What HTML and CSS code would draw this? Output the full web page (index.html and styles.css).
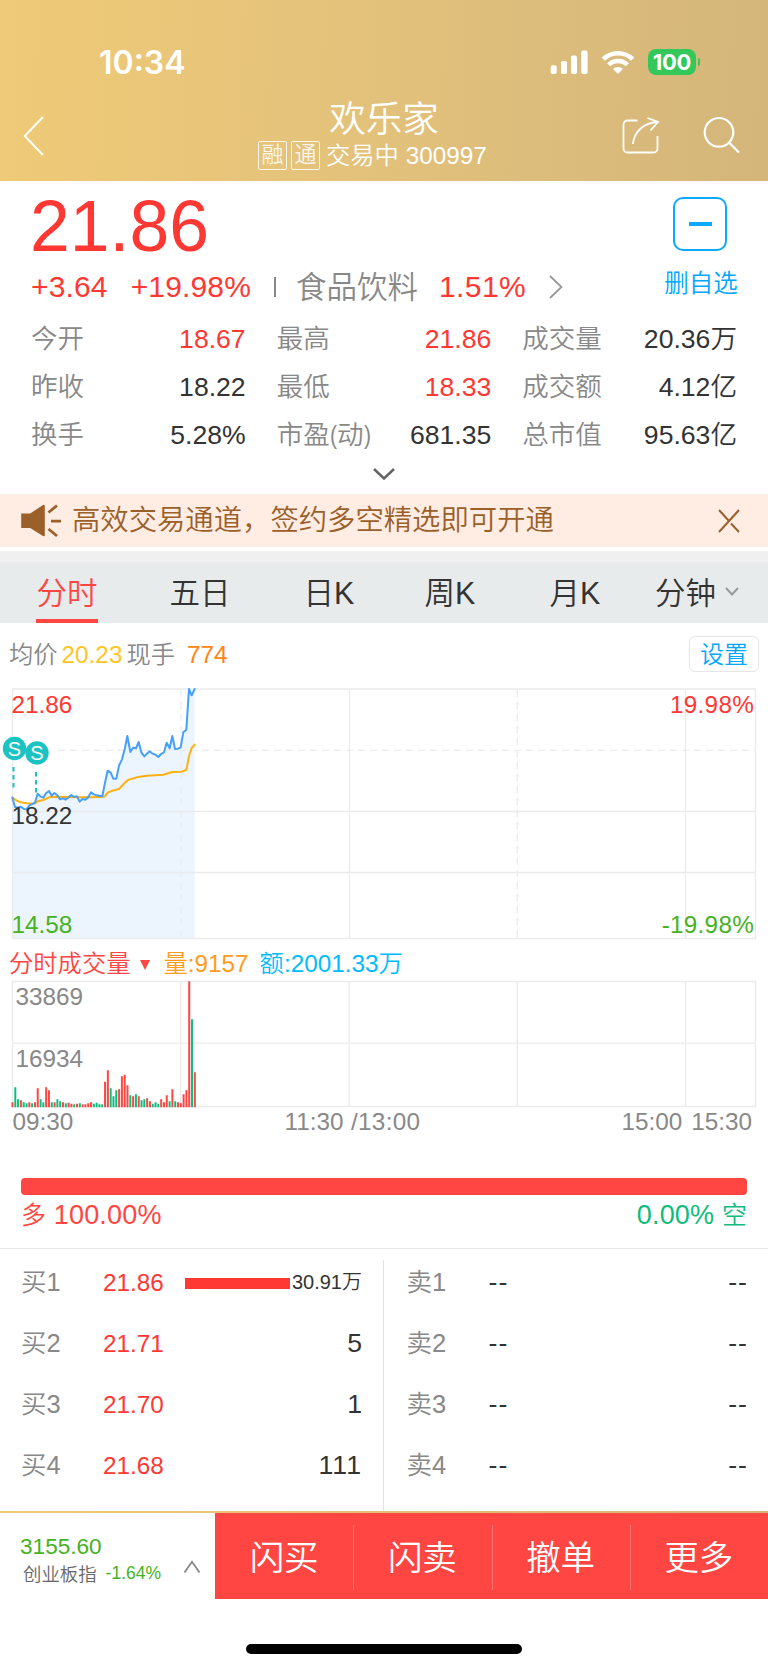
FILE: index.html
```html
<!DOCTYPE html>
<html lang="zh-CN">
<head>
<meta charset="utf-8">
<title>欢乐家 300997</title>
<link rel="stylesheet" href="styles.css">
</head>
<body>
<div class="app">
  <header class="header">
    <div class="status">
      <span class="clock">10:34</span>
      <div class="status-icons">
        <svg class="signal" width="38" height="26" viewBox="0 0 38 26" fill="#fff"><rect x=".7" y="15.3" width="6" height="8.7" rx="1.8"/><rect x="11" y="11" width="6" height="13" rx="1.8"/><rect x="21" y="5.6" width="6" height="18.4" rx="1.8"/><rect x="31.2" y="0.6" width="6.4" height="23.4" rx="1.8"/></svg>
        <svg class="wifi" width="34" height="26" viewBox="0 0 34 26" fill="none" stroke="#fff"><path d="M2.3 9.2a21 21 0 0 1 29.4 0" stroke-width="4.6"/><path d="M7.6 14.8a13.4 13.4 0 0 1 18.8 0" stroke-width="4.4"/><path d="M17 24l-5-5.1a7.2 7.2 0 0 1 10 0z" fill="#fff" stroke="none"/></svg>
        <span class="battery">100</span><i class="nub"></i>
      </div>
    </div>
    <div class="nav">
      <svg class="back" width="22" height="42" viewBox="0 0 22 42" fill="none" stroke="#fff" stroke-width="2"><path d="M20 2L1.8 21 20 40"/></svg>
      <div class="title">
        <h1>欢乐家</h1>
        <p><span class="tag">融</span><span class="tag">通</span><span class="state">交易中 300997</span></p>
      </div>
      <div class="nav-actions">
        <svg width="38" height="40" viewBox="0 0 38 40" fill="none" stroke="#fff" stroke-width="1.8"><path d="M15.5 4.5H5.5a4 4 0 0 0-4 4V32.500a4 4 0 0 0 4 4H31.500a4 4 0 0 0 4-4V20"/><path d="M10.800 28C12.500 15 22 7 35 6M25.500 2L36 6l-7.500 8.500"/></svg>
        <svg width="38" height="40" viewBox="0 0 38 40" fill="none" stroke="#fff" stroke-width="2.200"><circle cx="16" cy="16.300" r="14.300"/><path d="M26 26.500L36 36.500"/></svg>
      </div>
    </div>
  </header>

  <section class="quote">
    <div class="quote-main">
      <div class="price">21.86</div>
      <div class="change"><span>+3.64</span><span class="pct">+19.98%</span><i class="bar"></i><span class="sector">食品饮料</span><span class="sector-pct">1.51%</span>
        <svg width="16" height="26" viewBox="0 0 16 26" fill="none" stroke="#999" stroke-width="1.8"><path d="M2 2l11.500 11L2 24"/></svg></div>
    </div>
    <div class="watch"><div class="minus"><i></i></div><span>删自选</span></div>
  </section>
  <dl class="stats">
    <div><dt>今开</dt><dd class="up">18.67</dd></div><div><dt>最高</dt><dd class="up">21.86</dd></div><div><dt>成交量</dt><dd>20.36万</dd></div>
    <div><dt>昨收</dt><dd>18.22</dd></div><div><dt>最低</dt><dd class="up">18.33</dd></div><div><dt>成交额</dt><dd>4.12亿</dd></div>
    <div><dt>换手</dt><dd>5.28%</dd></div><div><dt>市盈<span class="paren">(</span>动<span class="paren">)</span></dt><dd>681.35</dd></div><div><dt>总市值</dt><dd>95.63亿</dd></div>
  </dl>
  <div class="expand"><svg width="24" height="14" viewBox="0 0 24 14" fill="none" stroke="#666" stroke-width="2.600"><path d="M2 2l10 9.500L22 2"/></svg></div>

  <div class="banner">
    <svg width="42" height="36" viewBox="0 0 42 36" fill="#9b602a"><path d="M1.200 10.500h9L23 2q1.800-1 1.800 1V32q0 2-1.800 1L10.200 25h-9z"/><g stroke="#9b602a" stroke-width="2.800" fill="none"><path d="M28.500 9.500L37 2.500M31 18.200h10M28.500 26L37 33"/></g></svg>
    <span>高效交易通道，签约多空精选即可开通</span>
    <svg width="24" height="26" viewBox="0 0 24 26" fill="none" stroke="#9b602a" stroke-width="2"><path d="M22 2L2 24M2 2l9.500 10.500M14 15.500l8 8.500"/></svg>
  </div>
  <nav class="tabs">
    <a class="active">分时</a><a>五日</a><a>日K</a><a>周K</a><a>月K</a><a>分钟<svg width="16" height="11" viewBox="0 0 16 11" fill="none" stroke="#999" stroke-width="2"><path d="M2 2l6 6.500L14 2"/></svg></a>
  </nav>

  <div class="info"><span class="c-gray">均价</span><span class="avg">20.23</span><span class="c-gray">现手</span><span class="hand">774</span><button class="settings">设置</button></div>

  <svg class="chart" width="768" height="260" viewBox="0 680 768 260">
    <path d="M12.300 797.700L15 807 24 808.500 29 806 35 803 38 794 46 793 49 791 60 798 72 794 80 801 92 792 102 796.500 105 782.700 107.500 771 110.700 773 113.300 778.700 116.300 778.700 119 765.700 122 759 124.700 749 127.500 736 130.300 752 133 748 139 742 144 756 150 751 158 757 164 752 167 742.500 170 748 172 736 175 749 181 747 183.300 732.500 186.300 729.500 189 689 191.700 695 194.700 689V938.500H12.300z" class="area"/>
    <g class="grid">
      <path d="M12.500 689H755.500V938.500H12.500zM12.500 811.500H755.500M12.500 872.500H755.500M349.500 689V938.500M685.500 689V938.500"/>
      <path class="dash" d="M58 750.300H755.500M181 690V938.500M517.300 690V938.500"/>
    </g>
    <text x="11.500" y="712.500" class="up">21.86</text>
    <text x="754" y="712.500" class="up end wide">19.98%</text>
    <text x="11.500" y="933" class="down">14.58</text>
    <text x="754" y="933" class="down end wide">-19.98%</text>
    <g transform="translate(0 680) scale(.333333)" fill="none" stroke-width="6" stroke-linejoin="round" stroke-linecap="round">
      <polyline stroke="#ffb013" points="37,353 50,362 62,367 80,370 97,371 105,370 113,364 130,360 147,352 170,350 240,352 280,352 313,350 323,338 335,333 357,327 370,313 384,300 410,292 440,287 490,284 517,276 545,275 559,270 567,228 575,204 584,194"/>
      <polyline stroke="#47a0f8" points="37,353 45,381 54,383 62,380 72,387 80,388 88,376 97,372 105,368 113,341 121,349 130,353 138,340 147,333 155,347 163,339 172,346 180,358 189,355 197,359 206,352 214,345 222,351 231,349 239,365 247,357 256,359 264,353 273,337 281,343 290,346 307,349 315,308 323,272 332,278 340,296 349,296 357,257 366,238 374,208 382,168 391,216 399,203 408,205 416,186 424,217 433,229 441,221 449,214 458,221 466,224 475,231 483,222 492,217 500,188 509,205 517,168 525,207 534,206 542,202 550,157 559,149 567,27 575,46 584,27"/>
    </g>
    <text x="11.500" y="823.500" class="ink">18.22</text>
    <g class="marks"><path d="M13.500 767V788M36 772V793"/><circle cx="14.500" cy="748.500" r="11.700"/><circle cx="37" cy="753" r="11.700"/><text x="14.500" y="755.500">S</text><text x="37" y="760">S</text></g>
  </svg>

  <div class="vol-legend"><span class="c-red">分时成交量</span><i class="tri"></i><span class="c-orange">量:9157</span><span class="c-sky">额:2001.33万</span></div>
  <svg class="chart" width="768" height="164" viewBox="0 980 768 164">
    <path class="grid" d="M12.500 981.500H755.500V1106.500H12.500zM12.500 1043.200H755.500M180.700 981.500V1106.500M349.200 981.500V1106.500M517.300 981.500V1106.500M685.500 981.500V1106.500"/>
    <g transform="translate(12.500 1107.300) scale(2.805 1)" fill="none" stroke-width="2">
      <path class="bars" stroke="#0cbd80" d="M1 0v-20M2 0v-8M4 0v-5M5 0v-4M7 0v-4M10 0v-8M11 0v-5M14 0v-5M16 0v-8M17 0v-6M19 0v-4M22 0v-3M24 0v-4M29 0v-3.500M30 0v-4.500M31 0v-3M32 0v-3M35 0v-19M36 0v-11M37 0v-17M42 0v-12M44 0v-13M46 0v-7M47 0v-8M50 0v-3.500M51 0v-5M52 0v-3.500M56 0v-6M58 0v-6M64 0v-88"/>
      <path class="bars" stroke="#ff4642" d="M0 0v-5M3 0v-7M6 0v-5M8 0v-5M9 0v-19M12 0v-20M13 0v-17M15 0v-5M18 0v-5M20 0v-4.500M21 0v-3.500M23 0v-3.500M25 0v-3M26 0v-3M27 0v-4M28 0v-5M33 0v-25.500M34 0v-37M38 0v-18M39 0v-31M40 0v-32.500M41 0v-22M43 0v-11M45 0v-11M48 0v-9M49 0v-6M53 0v-8M54 0v-5M55 0v-12M57 0v-18M59 0v-5M60 0v-4M61 0v-13M62 0v-17M63 0v-126M65 0v-35"/>
    </g>
    <g class="muted"><text x="15.500" y="1005">33869</text><text x="15.500" y="1066.500">16934</text><text x="12.500" y="1130">09:30</text><text x="284.500" y="1130">11:30</text><text x="351" y="1130" textLength="69">/13:00</text><text x="621.500" y="1130">15:00</text><text x="752" y="1130" class="end">15:30</text></g>
  </svg>

  <section class="ratio">
    <div class="ratio-bar"></div>
    <div class="ratio-text"><span class="c-red"><b>多</b> 100.00%</span><span class="c-green">0.00% <b>空</b></span></div>
  </section>

  <section class="book">
    <div class="side buy">
      <div class="row"><span class="lv">买1</span><span class="px">21.86</span><i class="depth"></i><span class="qty small">30.91万</span></div>
      <div class="row"><span class="lv">买2</span><span class="px">21.71</span><span class="qty">5</span></div>
      <div class="row"><span class="lv">买3</span><span class="px">21.70</span><span class="qty">1</span></div>
      <div class="row"><span class="lv">买4</span><span class="px">21.68</span><span class="qty ones">111</span></div>
    </div>
    <div class="side sell">
      <div class="row"><span class="lv">卖1</span><span class="none">--</span><span class="none qty">--</span></div>
      <div class="row"><span class="lv">卖2</span><span class="none">--</span><span class="none qty">--</span></div>
      <div class="row"><span class="lv">卖3</span><span class="none">--</span><span class="none qty">--</span></div>
      <div class="row"><span class="lv">卖4</span><span class="none">--</span><span class="none qty">--</span></div>
    </div>
  </section>

  <footer class="footer">
    <div class="index">
      <div><div class="idx-val">3155.60</div><div class="idx-sub"><span class="idx-name">创业板指</span><span class="idx-pct">-1.64%</span></div></div>
      <svg width="18" height="14" viewBox="0 0 18 14" fill="none" stroke="#888" stroke-width="1.800"><path d="M1.500 12.500L9 1.800l7.500 10.700"/></svg>
    </div>
    <div class="actions"><a>闪买</a><a>闪卖</a><a>撤单</a><a>更多</a></div>
  </footer>
  <div class="home"><i></i></div>
</div>
</body>
</html>
```
FILE: styles.css
```css
* { box-sizing: border-box; margin: 0; padding: 0; }
body { background: #fff; font-family: "Liberation Sans", "Noto Sans CJK SC", sans-serif; font-weight: 350; color: #333; }
i, b { font-style: normal; font-weight: inherit; }
svg { display: block; flex: none; }
.app { width: 768px; height: 1670px; overflow: hidden; white-space: nowrap; display: flex; flex-direction: column; }
.app > * { flex: none; }
.up { color: #ff3834; fill: #ff3834; }
.c-gray { color: #888; }
.c-red { color: #ff4642; }
.c-orange { color: #ff9c20; }
.c-sky { color: #00bcff; }
.c-green { color: #0ebd7d; }

.header { height: 181px; background: linear-gradient(92deg, #efca77 0%, #e2c17b 50%, #d4b67b 100%); color: #fff; }
.status { height: 96px; padding: 43px 68px 0 99px; display: flex; justify-content: space-between; }
.clock { font: 600 32px/40px Inter, sans-serif; }
.status-icons { display: flex; padding-top: 6px; height: 33px; align-items: flex-start; }
.signal { margin-top: 1px; }
.wifi { margin: 1px 13px 0 13px; }
.battery { width: 48px; height: 26px; border-radius: 8px; background: #34c759; font: 700 22px/26px Inter, sans-serif; text-align: center; letter-spacing: -0.3px; }
.nub { width: 2px; height: 8px; margin: 9px 0 0 2px; border-radius: 0 3px 3px 0; background: #34c759; }
.nav { display: grid; grid-template-columns: 200px 1fr 200px; height: 85px; }
.back { margin: 19px 0 0 23px; }
.title { text-align: center; padding-top: 2px; }
.title h1 { font-size: 36.500px; line-height: 44px; font-weight: inherit; }
.title p { display: flex; font-size: 24.300px; line-height: 28px; padding-left: 58px; }
.tag { width: 29px; height: 29px; border: 1.500px solid #fff; border-radius: 2px; font-size: 22px; line-height: 26px; margin: -1px 4px 0 0; opacity: .85; }
.state { margin-left: 2px; }
.nav-actions { display: flex; gap: 43px; justify-content: flex-end; padding: 20px 27px 0 0; }

.quote { height: 134px; padding: 0 31px; display: flex; justify-content: space-between; }
.price { font-size: 71.500px; line-height: 80px; height: 86px; padding-top: 5px; color: #ff3834; margin-left: -1px; }
.change { display: flex; align-items: center; height: 40px; line-height: 40px; font-size: 30px; color: #ff3834; letter-spacing: .15px; }
.pct { margin-left: 23px; }
.bar { width: 2px; height: 20px; background: #888; margin-left: 23px; }
.sector { margin-left: 20px; font-size: 30.500px; color: #888; letter-spacing: 0; }
.sector-pct { margin-left: 21px; letter-spacing: .4px; }
.change svg { margin-left: 22px; }
.watch { display: flex; flex-direction: column; align-items: center; width: 74px; padding-top: 16px; font-size: 24.500px; line-height: 34px; color: #00a6ff; }
.watch span { margin: 16px -2px 0 0; }
.minus { width: 54px; height: 54px; border: 2px solid #0caaff; border-radius: 10px; display: flex; align-items: center; justify-content: center; }
.minus i { width: 23px; height: 4px; background: #0caaff; }
.stats { display: grid; grid-template-columns: repeat(3, 1fr); column-gap: 31px; padding: 0 31px; font-size: 26.600px; line-height: 49px; }
.stats > div { display: flex; justify-content: space-between; height: 48px; }
.stats dt { color: #888; font-size: 26.500px; }
.paren { display: inline-block; transform: scaleX(.8); margin: 0 -0.8px; }
.expand { height: 35px; padding-top: 8px; display: flex; justify-content: center; }

.banner { height: 53px; background: #ffede3; color: #9b602a; display: flex; align-items: center; padding: 0 27px 0 20px; font-size: 28.350px; line-height: 55px; }
.banner span { flex: 1; margin-left: 10px; }
.tabs { margin-top: 4px; border-top: 11px solid #f0f0f0; height: 72px; background: #e8ebec; display: grid; grid-template-columns: 134px 132px 126px 116px 134px 111px; font-size: 30.500px; line-height: 64px; }
.tabs a { display: flex; justify-content: center; align-items: center; height: 61px; }
.tabs svg { margin: -2px 0 0 8px; }
.tabs .active { color: #ff4642; width: 62px; justify-self: center; border-bottom: 4px solid #ff4642; line-height: 57px; padding-top: 5px; }

.info { height: 57px; padding: 13px 9px 0; display: flex; font-size: 24.300px; line-height: 36px; }
.info > span { padding-top: 1px; }
.avg { color: #ffc526; margin: 0 4px 0 4px; }
.hand { color: #ff8412; margin-left: 12px; }
.settings { margin-left: auto; width: 70px; height: 36px; border: 1px solid #e6e6e6; border-radius: 6px; background: #fff; color: #00a6ff; font: inherit; font-size: 24px; line-height: 35px; }
.chart { font-size: 24.300px; }
.chart .end { text-anchor: end; }
.wide { letter-spacing: .25px; }
.area { fill: #ecf5fe; }
.grid { fill: none; stroke: #ebebeb; stroke-width: 1.300; }
.dash { stroke-dasharray: 7 5; }
.down { fill: #46b222; }
.ink { fill: #333; }
.muted { fill: #888; }
.marks path { stroke: #1bc3c2; stroke-width: 2; stroke-dasharray: 4.500 3.500; }
.marks circle { fill: #1bc3c2; }
.marks text { fill: #fff; font-size: 20px; text-anchor: middle; }
.bars { vector-effect: non-scaling-stroke; }
.vol-legend { height: 40px; padding: 4px 9px 0; display: flex; font-size: 24.300px; line-height: 39px; }
.tri { border: 5px solid transparent; border-top: 10px solid #ff4642; border-bottom: 0; margin: 16px 13px 0 10px; height: 10px; }
.c-sky { margin-left: 11px; }

.ratio { height: 105px; padding: 34px 21px 0; border-bottom: 1.500px solid #e6e6e6; }
.ratio-bar { height: 16.500px; border-radius: 4px; background: #ff4642; }
.ratio-text { display: flex; justify-content: space-between; font-size: 27px; line-height: 40px; letter-spacing: .2px; }
.ratio-text b { font-size: 25px; letter-spacing: 0; }
.book { height: 262px; padding-top: 11px; display: grid; grid-template-columns: 384px 384px; }
.side { height: 251px; padding-top: 3px; }
.buy { border-right: 1px solid #e2e2e2; padding-left: 21px; padding-right: 21px; }
.sell { padding-left: 22.500px; padding-right: 20px; }
.row { display: flex; height: 61px; line-height: 39px; font-size: 25.500px; }
.lv { width: 82px; color: #888; }
.px { color: #ff3834; font-size: 24.300px; }
.qty { margin-left: auto; font-size: 26.700px; }
.ones { letter-spacing: 1px; }
.depth { width: 105px; height: 11px; background: #ff3834; margin: 15px 0 0 21px; }
.small { font-size: 20px; margin-left: auto; line-height: 38px; }
.none { font-size: 26.700px; letter-spacing: 1px; }

.footer { height: 89px; display: grid; grid-template-columns: 215px 1fr; border-top: 2.500px solid; border-image: linear-gradient(90deg, #efca77, #d4b67b) 1; }
.index { display: flex; justify-content: space-between; padding: 0 14px 0 20px; }
.idx-val { font-size: 22.600px; line-height: 30px; color: #46b222; margin-top: 19px; }
.idx-sub { display: flex; line-height: 26px; font-size: 17.500px; color: #46b222; margin-top: -2px; }
.idx-name { font-size: 18.400px; color: #666; margin: 1px 9px 0 3px; line-height: 28px; }
.index svg { margin-top: 47px; }
.actions { display: grid; grid-template-columns: repeat(4, 1fr); height: 86px; background: #ff4642; color: #fff; font-size: 34.500px; line-height: 90px; text-align: center; }
.actions a { position: relative; }
.actions a + a::before { content: ""; position: absolute; left: 0; top: 12px; width: 1px; height: 65px; background: rgba(255,255,255,.25); }
.home { height: 70px; padding-top: 44px; display: flex; justify-content: center; }
.home i { width: 276px; height: 10px; border-radius: 5px; background: #000; }
```
